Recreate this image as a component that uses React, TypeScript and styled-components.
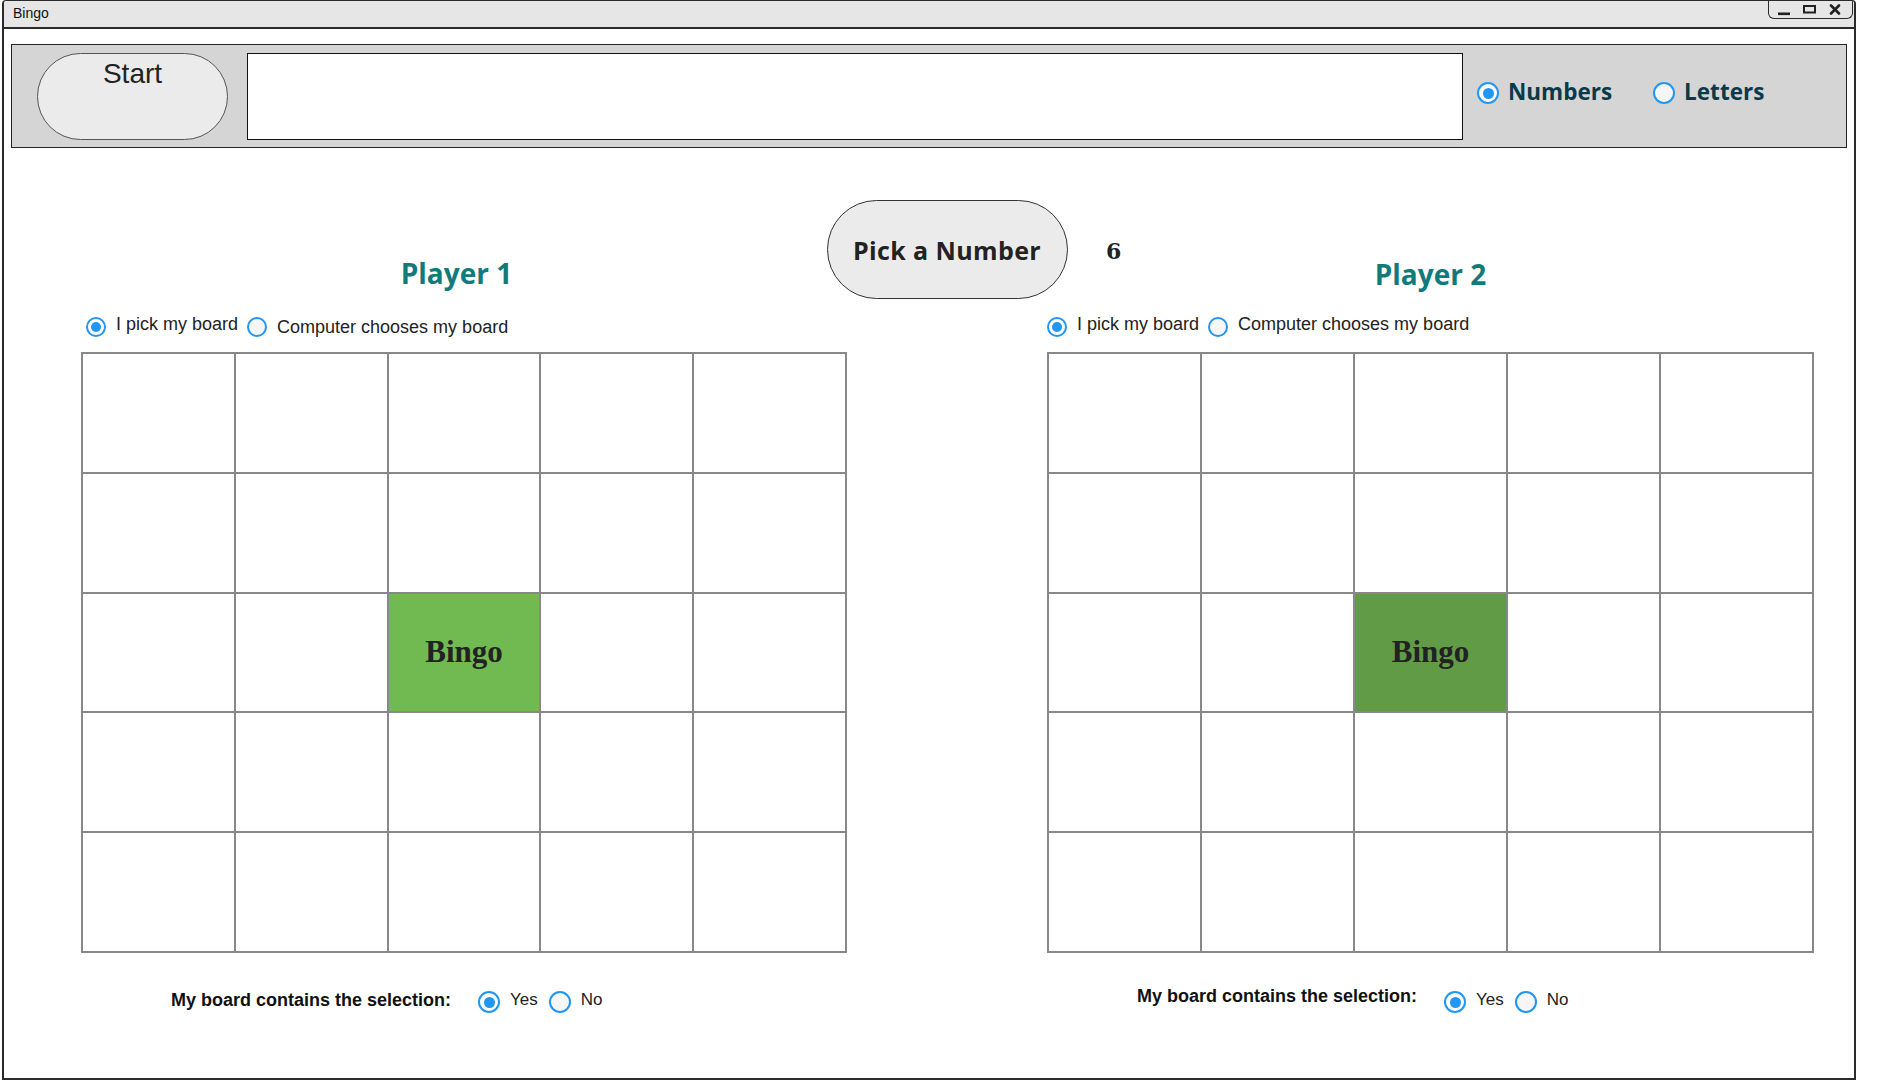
import React from "react";
import styled, { createGlobalStyle } from "styled-components";

const players = [
  { id: 1, name: "Player 1", headShift: 15, headLift: 12, indent: 5, secondDrop: true, free: "#71b951", labelLift: 4 },
  { id: 2, name: "Player 2", headShift: 0, headLift: 11, indent: 0, secondDrop: false, free: "#619b45", labelLift: 12 },
];

const cells = Array.from({ length: 25 }, (_, i) => i);

const App: React.FC = () => {
  return (
    <>
      <GlobalStyle />
      <Window>
        <TitleBar>
          <TitleText>Bingo</TitleText>
          <Controls>
            <svg width="12" height="12" viewBox="0 0 12 12">
              <rect x="0" y="8.5" width="12" height="2.6" fill="#222" />
            </svg>
            <svg width="13" height="12" viewBox="0 0 13 12">
              <rect x="1" y="2" width="11" height="6.5" fill="none" stroke="#222" strokeWidth="2" />
            </svg>
            <svg width="12" height="12" viewBox="0 0 12 12">
              <path d="M2 1.5 L10 9.5 M10 1.5 L2 9.5" stroke="#222" strokeWidth="2.6" strokeLinecap="round" />
            </svg>
          </Controls>
        </TitleBar>

        <Toolbar>
          <StartButton>Start</StartButton>
          <SelectionField readOnly value="" />
          <ModeGroup>
            <ModeOption>
              <Radio $size={22} $on />
              <ModeLabel>Numbers</ModeLabel>
            </ModeOption>
            <ModeOption>
              <Radio $size={22} />
              <ModeLabel>Letters</ModeLabel>
            </ModeOption>
          </ModeGroup>
        </Toolbar>

        <Main>
          <TopRow>
            <Heading $col={1} $shift={players[0].headShift} $lift={players[0].headLift}>
              {players[0].name}
            </Heading>
            <PickCell>
              <PickButton>Pick a Number</PickButton>
            </PickCell>
            <DrawnNumber>6</DrawnNumber>
            <Heading $col={3} $shift={players[1].headShift} $lift={players[1].headLift}>
              {players[1].name}
            </Heading>
          </TopRow>

          <Boards>
            {players.map((p) => (
              <Panel key={p.id}>
                <ChoiceRow $indent={p.indent}>
                  <Radio $size={20} $on />
                  <ChoiceLabel>I pick my board</ChoiceLabel>
                  <Radio $size={20} />
                  <ChoiceLabel $drop={p.secondDrop}>Computer chooses my board</ChoiceLabel>
                </ChoiceRow>

                <Board>
                  {cells.map((i) => (
                    <Cell key={i} $free={i === 12 ? p.free : undefined}>
                      {i === 12 ? "Bingo" : ""}
                    </Cell>
                  ))}
                </Board>

                <ConfirmRow>
                  <ConfirmLabel $lift={p.labelLift}>My board contains the selection:</ConfirmLabel>
                  <Radio $size={22} $on />
                  <AnswerText>Yes</AnswerText>
                  <Radio $size={22} />
                  <AnswerText>No</AnswerText>
                </ConfirmRow>
              </Panel>
            ))}
          </Boards>
        </Main>
      </Window>
    </>
  );
};

export default App;

/* ------------------- Styled Components ------------------- */
const GlobalStyle = createGlobalStyle`
  html, body {
    margin: 0;
    padding: 0;
    background: #fff;
  }
  body {
    font-family: "Liberation Sans", Arial, sans-serif;
    color: #222;
  }
  * {
    box-sizing: border-box;
  }
`;

const Window = styled.div`
  width: 1854px;
  height: 1080px;
  margin-left: 2px;
  border: 2px solid #2b2b2b;
  border-top-width: 1px;
  border-radius: 4px 4px 0 0;
  background: #fff;
  display: flex;
  flex-direction: column;
  overflow: hidden;
`;

const TitleBar = styled.div`
  height: 28px;
  flex-shrink: 0;
  background: #e6e6e6;
  border-bottom: 2px solid #2b2b2b;
  display: flex;
  align-items: flex-start;
  padding-left: 9px;
`;

const TitleText = styled.span`
  font-size: 14px;
  line-height: 16px;
  padding-top: 4px;
  color: #111;
`;

const Controls = styled.div`
  margin-left: auto;
  margin-right: 1px;
  width: 85px;
  height: 18px;
  border: 1.5px solid #2b2b2b;
  border-top: none;
  border-radius: 0 0 6px 6px;
  display: flex;
  align-items: center;
  justify-content: space-around;
  padding: 0 4px 0 2px;
`;

const Toolbar = styled.div`
  margin: 15px 7px 0 7px;
  height: 104px;
  flex-shrink: 0;
  background: #d5d5d5;
  border: 1px solid #222;
  display: flex;
  align-items: center;
  padding-left: 25px;
`;

const StartButton = styled.button`
  width: 191px;
  height: 87px;
  flex-shrink: 0;
  border-radius: 44px;
  background: #ebebeb;
  border: 1px solid #555;
  font-family: "Liberation Sans", Arial, sans-serif;
  font-size: 28px;
  color: #222;
  display: flex;
  justify-content: center;
  align-items: flex-start;
  padding: 4px 0 0;
`;

const SelectionField = styled.input`
  width: 1216px;
  height: 87px;
  margin-left: 19px;
  flex-shrink: 0;
  background: #fff;
  border: 1px solid #111;
  outline: none;
`;

const ModeGroup = styled.div`
  display: flex;
  align-items: center;
  gap: 41px;
  margin-left: 14px;
  margin-bottom: 6px;
`;

const ModeOption = styled.label`
  display: flex;
  align-items: center;
  gap: 9px;
`;

const ModeLabel = styled.span`
  font-family: "Open Sans", "Noto Sans", sans-serif;
  font-weight: 700;
  font-size: 22.5px;
  color: #0a3a4a;
  margin-bottom: 4px;
`;

const Radio = styled.span<{ $size: number; $on?: boolean }>`
  width: ${(p) => p.$size}px;
  height: ${(p) => p.$size}px;
  flex-shrink: 0;
  border-radius: 50%;
  border: ${(p) => (p.$size > 20 ? 2.5 : 2)}px solid #2196f3;
  background: ${(p) => (p.$on ? "#fff" : "#f6f6f6")};
  display: inline-flex;
  align-items: center;
  justify-content: center;

  &::after {
    content: "";
    display: ${(p) => (p.$on ? "block" : "none")};
    width: ${(p) => Math.round(p.$size / 2)}px;
    height: ${(p) => Math.round(p.$size / 2)}px;
    border-radius: 50%;
    background: #2196f3;
  }
`;

const Main = styled.div`
  padding-left: 77px;
`;

const TopRow = styled.div`
  display: grid;
  grid-template-columns: 766px 200px 767px;
  grid-template-rows: 99px;
  margin-top: 52px;
`;

const Heading = styled.h2<{ $col: number; $shift: number; $lift: number }>`
  grid-column: ${(p) => p.$col};
  grid-row: 1;
  justify-self: center;
  align-self: end;
  margin: 0 ${(p) => p.$shift}px ${(p) => p.$lift}px 0;
  font-family: "Open Sans", "Noto Sans", sans-serif;
  font-weight: 700;
  font-size: 28px;
  line-height: 1;
  color: #117a7a;
`;

const PickCell = styled.div`
  grid-column: 2;
  grid-row: 1;
  display: flex;
  justify-content: center;
`;

const PickButton = styled.button`
  width: 241px;
  height: 99px;
  flex-shrink: 0;
  border-radius: 50px;
  background: #ebebeb;
  border: 1px solid #333;
  font-family: "Open Sans", "Noto Sans", sans-serif;
  font-weight: 700;
  font-size: 25px;
  letter-spacing: 0.4px;
  color: #222;
  padding: 0;
`;

const DrawnNumber = styled.span`
  grid-column: 3;
  grid-row: 1;
  justify-self: start;
  align-self: center;
  margin: 3px 0 0 59px;
  font-family: "DejaVu Serif", "Liberation Serif", serif;
  font-weight: 700;
  font-size: 22px;
  color: #222;
`;

const Boards = styled.div`
  display: grid;
  grid-template-columns: 766px 767px;
  column-gap: 200px;
`;

const Panel = styled.section`
  display: flex;
  flex-direction: column;
`;

const ChoiceRow = styled.div<{ $indent: number }>`
  display: flex;
  align-items: center;
  height: 20px;
  margin-top: 18px;
  padding-left: ${(p) => p.$indent}px;
`;

const ChoiceLabel = styled.span<{ $drop?: boolean }>`
  font-size: 18px;
  color: #222;
  margin: 0 9px ${(p) => (p.$drop ? 0 : 5)}px 10px;
`;

const Board = styled.div`
  margin-top: 15px;
  height: 601px;
  display: grid;
  grid-template-columns: repeat(5, 1fr);
  grid-template-rows: repeat(5, 1fr);
  border-top: 2px solid #888;
  border-left: 2px solid #888;
`;

const Cell = styled.div<{ $free?: string }>`
  border-right: 2px solid #888;
  border-bottom: 2px solid #888;
  background: ${(p) => p.$free ?? "#fff"};
  display: flex;
  align-items: center;
  justify-content: center;
  font-family: "Liberation Serif", "Times New Roman", serif;
  font-weight: 700;
  font-size: 31px;
  color: #222;
`;

const ConfirmRow = styled.div`
  display: flex;
  align-items: center;
  height: 22px;
  margin-top: 38px;
  padding-left: 90px;
`;

const ConfirmLabel = styled.span<{ $lift: number }>`
  font-weight: 700;
  font-size: 18px;
  color: #111;
  margin: 0 27px ${(p) => p.$lift}px 0;
`;

const AnswerText = styled.span`
  font-size: 17px;
  color: #222;
  margin: 0 11px 4px 10px;
`;
